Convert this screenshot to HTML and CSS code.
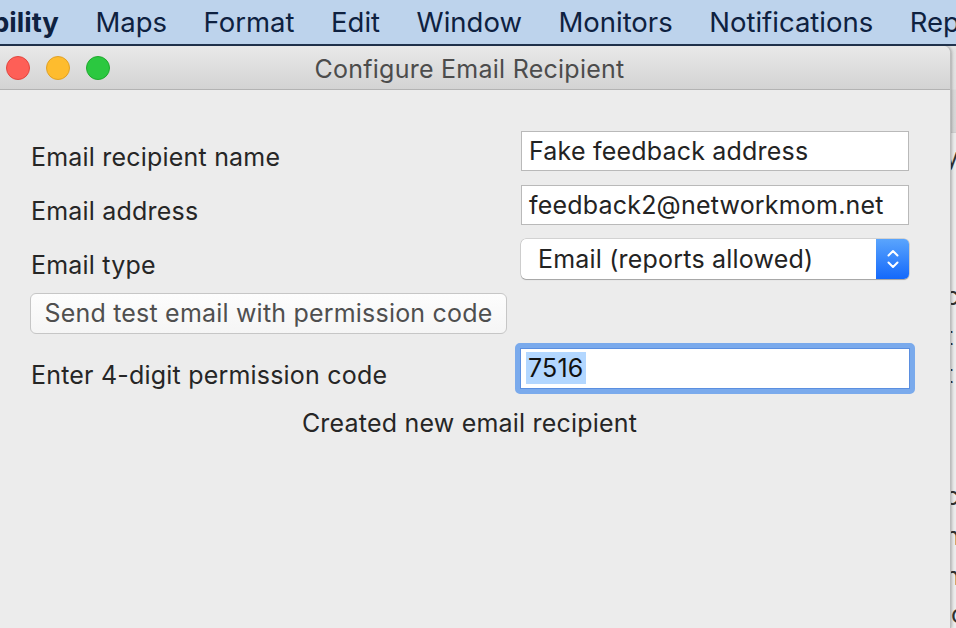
FILE: index.html
```html
<!DOCTYPE html>
<html>
<head>
<meta charset="utf-8">
<link rel="stylesheet" href="styles.css">
</head>
<body>
<div class="menubar">
  <span class="menu-item app">bility</span>
  <span class="menu-item">Maps</span>
  <span class="menu-item">Format</span>
  <span class="menu-item">Edit</span>
  <span class="menu-item">Window</span>
  <span class="menu-item">Monitors</span>
  <span class="menu-item">Notifications</span>
  <span class="menu-item">Rep</span>
</div>
<div class="desk">
  <div class="window">
    <div class="titlebar">
      <div class="lights">
        <span class="light red"></span>
        <span class="light yellow"></span>
        <span class="light green"></span>
      </div>
      <div class="title">Configure Email Recipient</div>
    </div>
    <div class="content">
      <div class="row">
        <div class="label">Email recipient name</div>
        <div class="field">Fake feedback address</div>
      </div>
      <div class="row">
        <div class="label">Email address</div>
        <div class="field">feedback2@networkmom.net</div>
      </div>
      <div class="row">
        <div class="label">Email type</div>
        <div class="popup">
          <span class="popup-text">Email (reports allowed)</span>
          <span class="stepper">
            <svg width="14" height="26" viewBox="0 0 14 26"><path d="M2.5 9.5 L7 5 L11.5 9.5 M2.5 16.5 L7 21 L11.5 16.5" fill="none" stroke="#fff" stroke-width="2" stroke-linecap="round" stroke-linejoin="round"/></svg>
          </span>
        </div>
      </div>
      <div class="button-row">
        <div class="button">Send test email with permission code</div>
      </div>
      <div class="row code-row">
        <div class="label">Enter 4-digit permission code</div>
        <div class="focus-ring"><div class="field focused"><span class="sel">7516</span></div></div>
      </div>
      <div class="status">Created new email recipient</div>
    </div>
  </div>
  <div class="behind">
    <div class="behind-top"></div>
    <div class="behind-body">
      <span class="frag f1">y</span>
      <span class="frag f2">c</span>
      <span class="frag f3">t</span>
      <span class="frag f4">t</span>
      <span class="frag f5">c</span>
      <span class="frag f6">n</span>
      <span class="frag f7">n</span>
      <span class="frag f8">ıc</span>
    </div>
  </div>
</div>
</body>
</html>
```
FILE: styles.css
```css
* { box-sizing: border-box; }
html, body { margin: 0; padding: 0; }
body {
  width: 956px;
  height: 628px;
  overflow: hidden;
  background: #e2e2e2;
  font-family: Inter, "Noto Sans", "Liberation Sans", sans-serif;
  color: #262626;
}
.menubar {
  height: 46px;
  background: #bdd3ec;
  border-bottom: 2px solid #22344f;
  display: flex;
  align-items: center;
  gap: 36.5px;
  margin-left: -8px;
  white-space: nowrap;
  overflow: hidden;
}
.menu-item {
  font-size: 27.5px;
  color: #0e2140;
  line-height: 44px;
  flex: none;
}
.menu-item.app { font-weight: 700; }
.desk {
  display: flex;
  height: 582px;
}
.window {
  flex: none;
  width: 962px;
  margin-left: -11px;
  background: #ececec;
  border-right: 1px solid #bcbcbc;
  border-top-right-radius: 7px;
  box-shadow: 1px 0 3px rgba(0,0,0,0.25);
  position: relative;
  z-index: 1;
  display: flex;
  flex-direction: column;
}
.titlebar {
  height: 44px;
  background: linear-gradient(#e9e9e9, #d3d3d3);
  border-bottom: 1px solid #b3b3b3;
  border-top-right-radius: 7px;
  display: flex;
  align-items: center;
  position: relative;
}
.lights {
  display: flex;
  gap: 16px;
  padding-left: 17px;
  padding-top: 1px;
}
.light {
  width: 24px;
  height: 24px;
  border-radius: 50%;
  display: block;
}
.light.red { background: #fe5f57; border: 1px solid #e2463f; }
.light.yellow { background: #febc2e; border: 1px solid #e1a125; }
.light.green { background: #2bc840; border: 1px solid #1eaa2d; }
.title {
  position: absolute;
  left: 0; right: 0; top: 0; bottom: 0;
  text-align: center;
  font-size: 25px;
  letter-spacing: 0.25px;
  line-height: 46px;
  color: #4c4c4c;
}
.content {
  padding: 41px 0 0 42px;
  display: flex;
  flex-direction: column;
  font-size: 25px;
  letter-spacing: 0.2px;
}
.row {
  display: flex;
  align-items: flex-start;
  height: 40px;
  margin-bottom: 14px;
}
.label {
  width: 490px;
  line-height: 28px;
  padding-top: 12px;
  color: #262626;
}
.field {
  width: 388px;
  height: 40px;
  background: #fff;
  border: 1px solid #b9b9b9;
  line-height: 38px;
  padding-left: 7px;
  color: #232323;
  white-space: nowrap;
}
.popup {
  width: 388px;
  height: 40px;
  background: #fff;
  border-radius: 5px;
  box-shadow: 0 0 0 0.5px rgba(0,0,0,0.22), 0 1px 1px rgba(0,0,0,0.22);
  display: flex;
  align-items: center;
  justify-content: space-between;
  overflow: hidden;
}
.popup-text {
  padding-left: 17px;
  color: #232323;
}
.stepper {
  width: 33px;
  height: 40px;
  background: linear-gradient(#5aa5fd, #1469fb);
  display: flex;
  align-items: center;
  justify-content: center;
}
.button-row {
  margin-left: -1px;
  height: 41px;
  margin-bottom: 9px;
}
.button {
  display: inline-block;
  height: 41px;
  width: 477px;
  background: linear-gradient(#fdfdfd, #f5f5f5);
  border: 1px solid #c6c6c6;
  border-radius: 6px;
  line-height: 39px;
  text-align: center;
  color: #4f4f4f;
  white-space: nowrap;
}
.code-row {
  height: 51px;
  margin-bottom: 0;
}
.code-row .label {
  padding-top: 18px;
  width: 484px;
}
.focus-ring {
  width: 400px;
  height: 51px;
  border: 5px solid #7aaaec;
  border-radius: 5px;
  background: #7aaaec;
}
.field.focused {
  width: 390px;
  height: 41px;
  border: 1px solid #5b8fe0;
  padding-left: 5px;
  line-height: 38px;
  color: #111;
}
.sel {
  background: #b3d7ff;
  padding: 0 2px;
  display: inline-block;
  line-height: 32px;
  vertical-align: middle;
  margin-top: -4px;
}
.status {
  margin-left: -42px;
  padding-top: 14px;
  text-align: center;
  line-height: 30px;
  color: #262626;
}
.behind {
  flex: 1;
  display: flex;
  flex-direction: column;
  overflow: hidden;
}
.behind-top {
  height: 97px;
  background: linear-gradient(#e4e4e4 0, #e0e0e0 43px, #d8d8d8 44px, #d6d6d6);
  border-bottom: 1px solid #cfcfcf;
}
.behind-body {
  flex: 1;
  background: #ececec;
  display: flex;
  flex-direction: column;
  font-size: 25px;
  color: #333;
  line-height: 28px;
}
.frag { display: block; margin-left: -6px; height: 28px; }
.f1 { margin-top: 10px; }
.f2 { margin-top: 111px; }
.f3 { margin-top: 12px; }
.f4 { margin-top: 10px; }
.f5 { margin-top: 94px; }
.f6 { margin-top: 12px; }
.f7 { margin-top: 12px; }
.f8 { margin-top: 10px; }
```
